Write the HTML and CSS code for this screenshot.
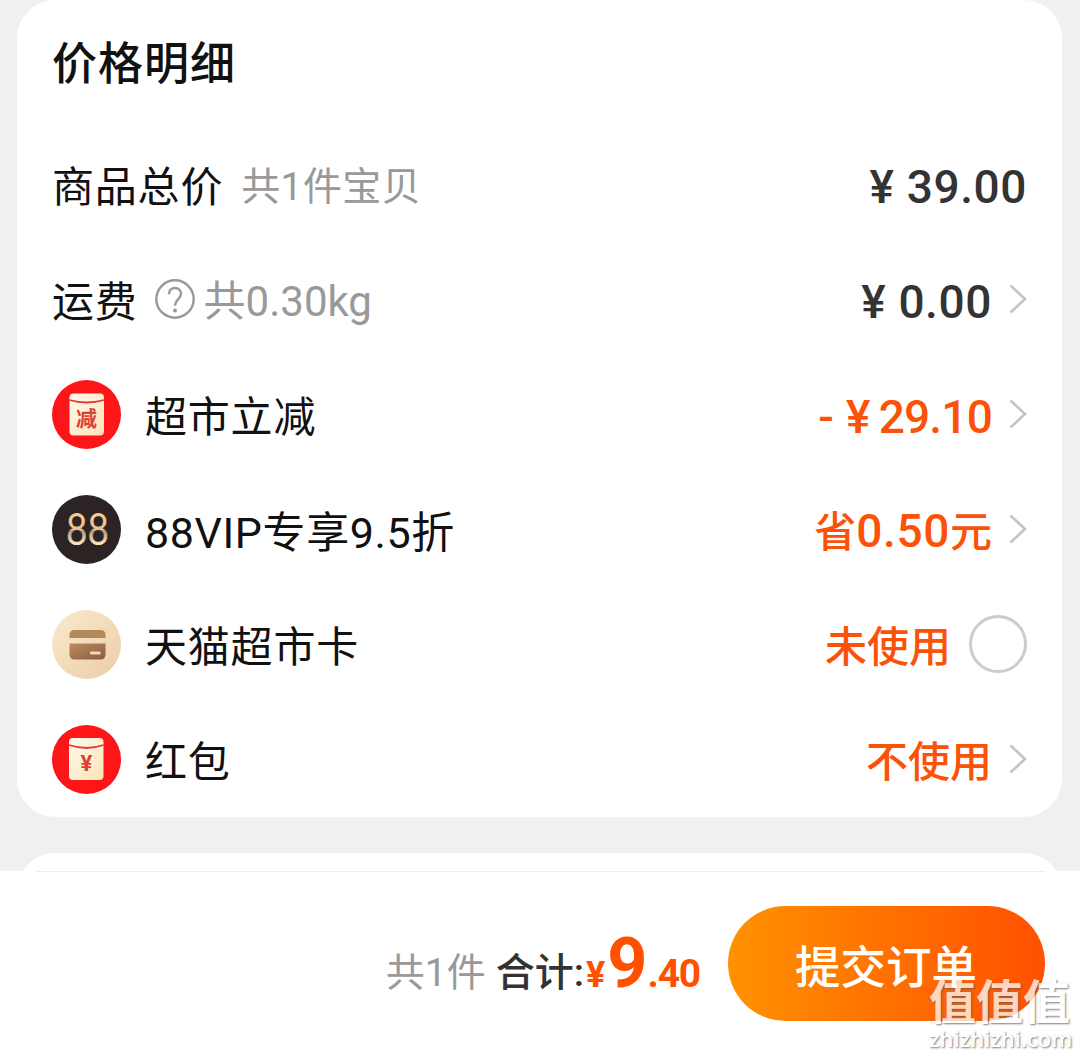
FILE: index.html
```html
<!DOCTYPE html>
<html lang="zh-CN">
<head>
    <meta charset="UTF-8">
    <meta name="viewport" content="width=device-width, initial-scale=1.0">
    <title>确认订单</title>
    <link rel="stylesheet" href="styles.css">
</head>
<body>
    <main class="price-card">
        <h1>价格明细</h1>
        <ul>
            <li>
                <span class="label">商品总价</span>
                <span class="note note-count">共1件宝贝</span>
                <span class="price price-last"><span class="yen">¥</span>39.00</span>
            </li>
            <li>
                <span class="label">运费</span>
                <svg class="help" viewBox="0 0 40 40">
                    <circle cx="20" cy="20" r="18.7"/>
                    <path d="M14 15.200c0-4 2.600-6.200 6-6.200s6 2.400 6 5.700c0 5-6 6-6 12"/>
                    <circle class="dot" cx="20" cy="31.500" r="2"/>
                </svg>
                <span class="note note-weight">共0.30kg</span>
                <span class="price"><span class="yen">¥</span>0.00</span>
                <svg class="arrow" viewBox="0 0 18 30"><path d="M1.5 1.5L16 15 1.5 28.5"/></svg>
            </li>
            <li>
                <svg class="icon" viewBox="0 0 69 69">
                    <defs>
                        <linearGradient id="packet" x1="0" y1="0" x2="1" y2="1">
                            <stop offset="0" stop-color="#fffaf0"/>
                            <stop offset="1" stop-color="#fbe3b5"/>
                        </linearGradient>
                    </defs>
                    <circle cx="34.5" cy="34.5" r="34.5" fill="#fd1517"/>
                    <rect x="17.500" y="13.500" width="34.500" height="42" rx="4" fill="url(#packet)"/>
                    <path d="M17.500 20Q34.500 25 52 20" fill="none" stroke="#e33a30" stroke-width="1.8"/>
                    <text class="icon-off" x="34.5" y="46">减</text>
                </svg>
                <span class="label">超市立减</span>
                <span class="price orange price-off"><span class="minus">-</span><span class="yen">¥</span>29.10</span>
                <svg class="arrow" viewBox="0 0 18 30"><path d="M1.5 1.5L16 15 1.5 28.5"/></svg>
            </li>
            <li>
                <svg class="icon" viewBox="0 0 69 69">
                    <defs>
                        <linearGradient id="gold" x1="0" y1="0" x2="0" y2="1">
                            <stop offset="0" stop-color="#f7d6a0"/>
                            <stop offset=".54" stop-color="#eebf8a"/>
                            <stop offset=".56" stop-color="#b09478"/>
                            <stop offset=".8" stop-color="#fbe5bd"/>
                        </linearGradient>
                    </defs>
                    <circle cx="34.5" cy="34.5" r="34.5" fill="#2c2324"/>
                    <text class="icon-vip" x="14" y="49.500" textLength="43" lengthAdjust="spacingAndGlyphs">88</text>
                </svg>
                <span class="label label-vip">88VIP专享9.5折</span>
                <span class="price orange"><span class="cn">省</span>0.50<span class="cn">元</span></span>
                <svg class="arrow" viewBox="0 0 18 30"><path d="M1.5 1.5L16 15 1.5 28.5"/></svg>
            </li>
            <li>
                <svg class="icon" viewBox="0 0 69 69">
                    <defs>
                        <linearGradient id="cream" x1="0" y1="0" x2="1" y2="1">
                            <stop offset="0" stop-color="#fbeacb"/>
                            <stop offset="1" stop-color="#ebcda9"/>
                        </linearGradient>
                        <linearGradient id="brown" x1="0" y1="0" x2="1" y2="1">
                            <stop offset="0" stop-color="#bb8d60"/>
                            <stop offset="1" stop-color="#8b5b3f"/>
                        </linearGradient>
                    </defs>
                    <circle cx="34.5" cy="34.5" r="34.5" fill="url(#cream)"/>
                    <path d="M17.5 28v-3q0-5 5-5h26q5 0 5 5v3z" fill="#b28a59"/>
                    <path d="M17.5 33.5h36V44q0 5.500-5 5.500h-26q-5 0-5-5.500z" fill="url(#brown)"/>
                    <rect x="38" y="41.500" width="10.500" height="3" rx="1" fill="#f9d5b4"/>
                </svg>
                <span class="label">天猫超市卡</span>
                <span class="price orange"><span class="cn">未使用</span></span>
                <span class="radio"></span>
            </li>
            <li>
                <svg class="icon" viewBox="0 0 69 69">
                    <circle cx="34.5" cy="34.5" r="34.5" fill="#fd1517"/>
                    <rect x="17" y="13" width="34.500" height="42" rx="4" fill="url(#packet)"/>
                    <path d="M17 20Q34.500 26 51.500 20" fill="none" stroke="#e33a30" stroke-width="1.8"/>
                    <text class="icon-yen" x="34.500" y="45.500">¥</text>
                </svg>
                <span class="label">红包</span>
                <span class="price orange"><span class="cn">不使用</span></span>
                <svg class="arrow" viewBox="0 0 18 30"><path d="M1.5 1.5L16 15 1.5 28.5"/></svg>
            </li>
        </ul>
    </main>

    <div class="next">
        <div class="next-card"></div>
    </div>

    <footer>
        <span class="count">共1件</span>
        <span class="total">合计:</span>
        <span class="sum"><span class="sum-yen">¥</span><span class="sum-int">9</span><span class="sum-dec">.40</span></span>
        <button>提交订单</button>
    </footer>

    <div class="watermark">
        <div class="mark-cn">值值值</div>
        <div class="mark-url">zhizhizhi.com</div>
    </div>
</body>
</html>
```
FILE: styles.css
```css
* {
    box-sizing: border-box;
}

body {
    position: relative;
    margin: 0;
    height: 1057px;
    overflow: hidden;
    background: #f0f0f0;
    font-family: Roboto, "Noto Sans CJK SC", sans-serif;
    color: #111;
}

.price-card {
    height: 817px;
    margin: 0 18px 0 17px;
    padding: 0 35px;
    background: #fff;
    border-radius: 38px;
}

h1 {
    height: 127px;
    margin: 0;
    font-size: 45px;
    font-weight: 500;
    line-height: 130px;
    letter-spacing: 1px;
}

ul {
    margin: 0;
    padding: 0;
    list-style: none;
}

li {
    display: flex;
    align-items: center;
    height: 115px;
    white-space: nowrap;
}

.label {
    font-size: 42px;
    line-height: 60px;
    letter-spacing: 0.8px;
    padding-top: 6px;
}

.label-vip {
    font-size: 43px;
    letter-spacing: 0.6px;
}

.note {
    color: #999;
    font-size: 39px;
    line-height: 60px;
    padding-top: 5px;
}

.note-count {
    margin-left: 18px;
    letter-spacing: 0.4px;
}

.note-weight {
    margin-left: 9px;
    font-size: 42px;
}

.icon {
    width: 69px;
    height: 69px;
    margin-right: 24px;
}

.icon-off {
    font: 700 21px "Noto Sans CJK SC", sans-serif;
    fill: #dc4132;
    text-anchor: middle;
}

.icon-yen {
    font: 700 22px Roboto, sans-serif;
    fill: #dc4132;
    text-anchor: middle;
}

.icon-vip {
    font: 400 45px Lato, sans-serif;
    fill: url(#gold);
}

.help {
    width: 40px;
    height: 40px;
    margin-left: 17px;
    margin-top: -1px;
    fill: none;
    stroke: #999;
    stroke-width: 2.4;
}

.help .dot {
    fill: #999;
    stroke: none;
}

.price {
    margin-left: auto;
    color: #333;
    font-size: 46px;
    font-weight: 500;
    line-height: 60px;
    letter-spacing: 0.6px;
    padding-top: 5px;
}

.price .cn {
    font-size: 42px;
    letter-spacing: 0;
}

.yen {
    margin-right: 12px;
}

.price-off {
    letter-spacing: -0.8px;
}

.price-off .yen {
    margin-right: 9px;
}

.minus {
    margin-right: 13px;
}

.orange {
    color: #fb5207;
}

.arrow {
    width: 18px;
    height: 30px;
    margin-left: 17px;
    margin-top: -1px;
    fill: none;
    stroke: #c4c4c4;
    stroke-width: 2.6;
}

.radio {
    width: 58px;
    height: 58px;
    margin-left: 18px;
    margin-top: -1px;
    border: 3px solid #ccc;
    border-radius: 50%;
}

.next {
    height: 54px;
    padding: 36px 18px 0 17px;
    overflow: hidden;
}

.next-card {
    height: 100px;
    background: #fff;
    border-radius: 38px;
}

footer {
    display: flex;
    align-items: center;
    justify-content: flex-end;
    height: 186px;
    padding-right: 35px;
    background: linear-gradient(#eee, #eee) 36px 0 / 1009px 1px no-repeat #fff;
    white-space: nowrap;
}

.count,
.total {
    font-size: 39px;
    line-height: 60px;
    padding-top: 17px;
}

.count {
    color: #999;
    margin-right: 10px;
}

.total {
    color: #333;
    font-weight: 500;
}

.sum {
    color: #ff5000;
    font-weight: 700;
    line-height: 80px;
    padding-top: 17px;
}

.sum-yen {
    margin: 0 3px 0 2px;
    font-size: 36px;
    letter-spacing: -1px;
}

.sum-int {
    font-size: 70px;
}

.sum-dec {
    font-size: 39px;
    letter-spacing: -1.2px;
}

button {
    width: 317px;
    height: 115px;
    margin: -1px 0 0 28px;
    padding: 0 1px 0 0;
    border: 0;
    border-radius: 58px;
    background: linear-gradient(90deg, #ff9200, #ff5000);
    color: #fff;
    font: 500 45.5px "Noto Sans CJK SC", sans-serif;
}

.watermark {
    position: absolute;
    left: 929px;
    top: 969px;
    color: #fff;
    opacity: 0.75;
    text-shadow: 1px 1px 2px #555;
    white-space: nowrap;
}

.mark-cn {
    font: 700 47px/60px "Noto Sans CJK SC", sans-serif;
}

.mark-url {
    font: 600 22px/18px "Open Sans", sans-serif;
}
```
